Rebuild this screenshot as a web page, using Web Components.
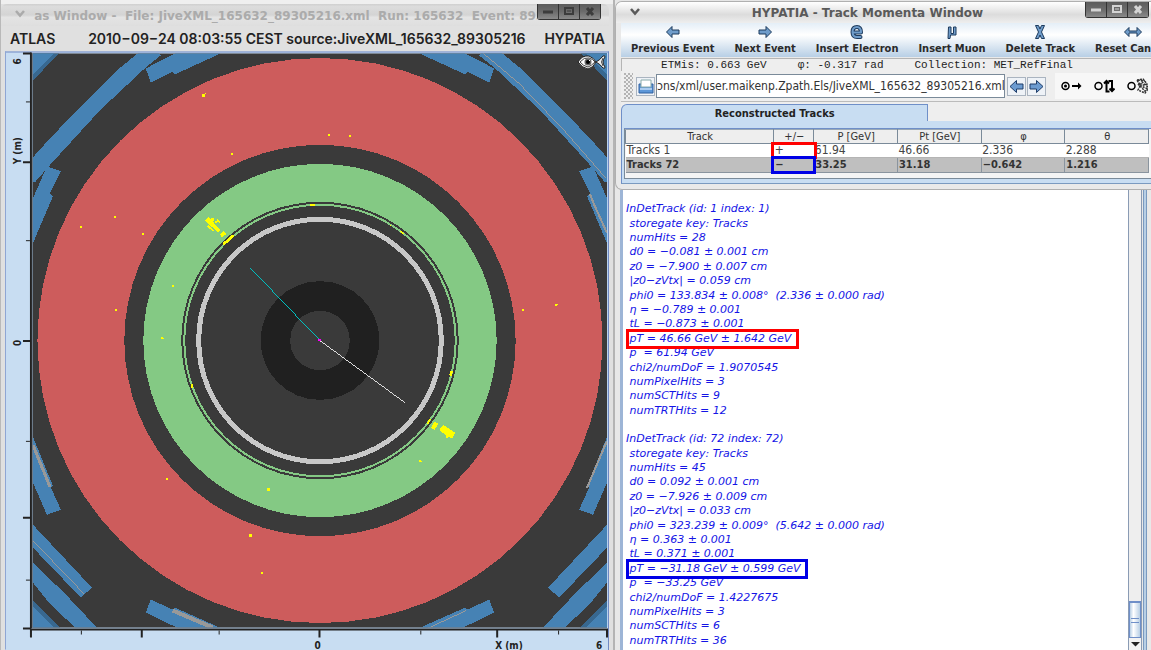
<!DOCTYPE html>
<html lang="en">
<head>
<meta charset="utf-8">
<title>HYPATIA</title>
<style>
html,body{margin:0;height:100%}
body{background:#e6e6e6;overflow:hidden;font-family:"DejaVu Sans",sans-serif;color:#222}
</style>
</head>
<body>
<hypatia-desktop></hypatia-desktop>
<script>
const COND = '"DejaVu Sans Condensed","DejaVu Sans",sans-serif';
const ICONS = {
  left: '<path d="M2.500 7L8 1.500V5H15V9H8V12.500Z"/>',
  right: '<path d="M15.500 7L10 1.500V5H3V9H10V12.500Z"/>',
  e: '<g fill="none" stroke-linecap="round"><path d="M5 7.500H13Q13 2 9 2Q4.500 2 4.500 7Q4.500 12 9 12H12.500" stroke-width="4"/><path d="M5 7.500H13Q13 2 9 2Q4.500 2 4.500 7Q4.500 12 9 12H12.500" stroke="#6f9cca" stroke-width="2"/></g>',
  mu: '<path d="M5 13.500L5.500 2H8V8.500H10.500V2H13V10H7.500L7 13.500Z"/>',
  x: '<path d="M4.500 .5H7.500L9 4L10.500 .5H13.500L10.500 7L13.500 13.500H10.500L9 10L7.500 13.500H4.500L7.500 7Z"/>',
  both: '<path d="M.5 7L5 2.500V6H13V2.500L17.500 7L13 11.500V8H5V11.500Z"/>'
};
function define(name, html, setup) {
  customElements.define(name, class extends HTMLElement {
    connectedCallback() {
      if (this.shadowRoot) return;
      const root = this.attachShadow({mode: 'open'});
      root.innerHTML = typeof html === 'function' ? html(this) : html;
      if (setup) setup(root, this);
    }
  });
}

/* minimise / maximise / close */
define('window-controls', `
<style>
:host{display:flex;flex:none;background:#333;border-radius:0 0 3px 3px;gap:1px;padding:0 1px 1px}
button{width:20px;height:15px;padding:0;border:0;background:linear-gradient(#5c5c5c,#6b6b6b 50%,#8a8a8a);display:grid;place-items:center}
svg{display:block;fill:none;stroke:var(--glyph,#d4d4d4);stroke-width:2}
</style>
<button aria-label="Minimise"><svg width="12" height="9"><path d="M1 5H11" stroke-width="3"/></svg></button>
<button aria-label="Maximise"><svg width="12" height="9"><rect x="2" y="1" width="8" height="6"/><path d="M4 4H8" stroke-width="1"/></svg></button>
<button aria-label="Close"><svg width="12" height="9"><path d="M3 1L9 8M9 1L3 8" stroke-width="3"/></svg></button>`);

define('title-bar', `
<style>
:host{display:flex;align-items:flex-start;font:bold 12px/14px "DejaVu Sans",sans-serif;color:var(--title,#5a5a5a);min-width:0}
.chev{flex:none;width:10px;height:8px;margin:6px 0 0 14px}
.t{flex:1;min-width:0;overflow:hidden;white-space:pre;text-align:var(--align,center);margin:var(--tm,4px 0 0 10px)}
</style>
<svg class="chev" viewBox="0 0 10 8" fill="none" stroke="currentColor" stroke-width="2.5"><path d="M1 1L5 5.500L9 1"/></svg>
<div class="t"><slot></slot></div><window-controls></window-controls>`);

/* detector cross-section with its axes; coordinates are in display units */
define('detector-view', `
<style>
:host{display:block;min-height:0}
svg{display:block;width:100%;height:100%}
text{font:bold 10px ${COND};fill:#222}
</style>
<svg viewBox="5 51 605 599" role="img" aria-label="ATLAS transverse view">
<defs><clipPath id="c"><rect x="33" y="53" width="575" height="575"/></clipPath></defs>
<rect x="5" y="51" width="605" height="600" fill="#c8ddf2"/>
<rect x="5" y="51" width="605" height="1" fill="#7089c4"/><rect x="609" y="51" width="1" height="600" fill="#7089c4"/>
<rect x="5" y="51" width="1" height="599" fill="#8fa6d4"/>
<rect x="32" y="53" width="576" height="575" fill="#3a3a3a"/>
<g clip-path="url(#c)" shape-rendering="crispEdges">
<g id="art"></g><g id="rings"></g>
<g fill="none">
<path d="M33 445L50 487" stroke="#999" stroke-width="3"/>
<path d="M33 541L84 594" stroke="#999"/>
<path d="M173 611L213 628" stroke="#999" stroke-width="4"/>
<path d="M428 629L467 611" stroke="#999"/>
<path d="M608 441L588 488" stroke="#999" stroke-width="2"/>
<path d="M483 52L520 83L565 130L607 178" stroke="#999"/>
<path d="M591 194L595 204L608 233" stroke="#999" stroke-width="2"/>
<path d="M251 268L320 340" stroke="#00c0c0"/>
<path d="M321 341L406 403" stroke="#ddd"/>
<path d="M319 340h3" stroke="#f0f" stroke-width="2"/>
</g><g id="hits" fill="#ff0"></g>
<g fill="#ff0">
<path d="M205 220L209 217L221 230L218 232Z"/><path d="M215 221h2v2h-2zM218 218l1 2 2 1-1 2-3-2zM211 218l3 0 1 3-2 0zM207 226l2-1 6 6-2 0z"/>
<path d="M220 234l4-3 3 3-5 3zM223 243l9-8h2v2l-9 8h-2z"/>
<path d="M427 424l3-5h2l-3 5zM432 428l3-6 4 2-4 6zM440 430l4-5 12 8-3 6-4-2v1h-2v-2z"/>
<path d="M311 204h5v2h-5zM389 224l3 1-1 1zM400 230l5 3-2 1zM450 375l1-4h3l-2 6zM191 384h2v4h-2z"/>
</g></g>
<path d="M31 52V629" stroke="#222" stroke-width="2"/><path d="M32.500 53V628" stroke="#6f7f90"/>
<path d="M30 630H609" stroke="#222" stroke-width="2"/><path d="M32 628.500H608" stroke="#6f7f90"/>
<path d="M608.500 53V628" stroke="#b8d2ee"/>
<g stroke="#222" stroke-width="2"><path d="M23 53h8M23 162h8M23 341h8M23 518h8M23 629h8M31 630v8M142 630v8M320 630v8M498 630v8M608 630v8"/>
<path stroke-width="1" d="M26 101.500h4M26 240.500h4M26 441.500h4M26 580.500h4M81.500 631v4M219.500 631v4M421.500 631v4M559.500 631v4"/></g>
<text transform="translate(21 64) rotate(-90)">6</text>
<text transform="translate(21 164) rotate(-90)">Y (m)</text>
<text transform="translate(21 346) rotate(-90)">0</text>
<text x="315" y="649">0</text><text x="496" y="649">X (m)</text><text x="597" y="649">6</text>
</svg>`, root => {
  const blue = '#4682b4', dark = '#386890';
  const shapes = [
    [dark, '33,52 60,52 33,80'], [blue, '33,52 55,52 33,74'],
    [blue, '139,52 158,52 161,55 146,67 100,110 48,167 35,182 33,182 33,157 51,137 81,106 117,70'],
    [blue, '146,68 177,52 223,52 175,74 173,71 151,82'],
    [blue, '47,166 61,171 50,193 53,196 33,243 33,198'],
    [blue, '33,437 53,486 51,488 61,510 47,515 33,483'],
    [blue, '33,525 92,588 81,598 33,548'],
    [blue, '33,563 65,594 97,628 75,628 49,603 33,583'],
    [dark, '33,601 60,628 33,628'], [blue, '33,607 54,628 33,628'],
    [blue, '151,600 173,610 175,608 220,628 177,628 146,613']];
  const one = shapes.map(([f, p]) => `<polygon fill="${f}" points="${p}"/>`).join('');
  root.getElementById('art').innerHTML = one + `<g transform="matrix(-1 0 0 1 641 0)">${one}</g>`;
  const gon = (r, n, f, s = '') => {
    const p = [];
    for (let i = 0; i < n; i++) {
      const a = i * 2 * Math.PI / n;
      p.push((320.5 + r * Math.cos(a)).toFixed(1) + ',' + (340.5 + r * Math.sin(a)).toFixed(1));
    }
    return `<polygon points="${p.join(' ')}" fill="${f}" ${s}/>`;
  };
  root.getElementById('rings').innerHTML =
    gon(283, 64, '#cd5c5c') + gon(196, 64, '#3a3a3a') + gon(177, 64, '#84c984') +
    gon(138, 64, 'none', 'stroke="#3a3a3a" stroke-width="2"') + gon(135, 64, '#3a3a3a') +
    gon(121.5, 64, 'none', 'stroke="#c8c8c8" stroke-width="5"') +
    gon(59.5, 32, '#202020') + gon(30, 20, '#3a3a3a');
  const hits = [[202,94,3],[205,93,1],[231,153,2],[329,134,2],[350,135,2],[80,226,2],[114,216,2],[142,233,2],[115,309,2],[523,309,2],[556,304,2],[558,304,1],[166,478,2],[267,488,3],[249,534,3],[261,572,2],[420,460,2],[422,461,1],[172,285,2],[161,337,2],[163,338,1]];
  root.getElementById('hits').innerHTML = hits.map(([x, y, s]) => `<rect x="${x}" y="${y}" width="${s}" height="${s}"/>`).join('');
});

define('atlas-window', `
<style>
:host{display:flex;flex-direction:column;min-width:0;min-height:0;background:#e0e0e0;border-right:2px solid #b4b4b4;border-left:1px solid #b9b9b9;box-sizing:border-box;padding:4px 4px 0 4px;box-shadow:inset 0 4px #efefef}
title-bar{height:22px;--title:#ababab;--glyph:#3c3c3c;--align:left;--tm:5px 0 0 5px;background:linear-gradient(#cfcfcf,#dcdcdc 12%,#d4d4d4 50%,#e4e4e4 60%,#dedede);border-radius:6px 6px 0 0;padding-right:8px;margin-left:-4px}
header{height:25px;display:flex;justify-content:space-between;align-items:center;font:600 14px/16px Inter,"DejaVu Sans",sans-serif;padding:0 4px 0 5px;white-space:nowrap;background:#e0e0e0}
header span:nth-child(2){margin:0 0 0 14px}
.view{flex:1;min-height:0;position:relative;display:grid}
button{position:absolute;top:3px;right:3px;width:29px;height:16px;padding:0;border:0;background:none}
</style>
<title-bar> as Window -  File: JiveXML_165632_89305216.xml  Run: 165632  Event: 89305216</title-bar>
<header><span>ATLAS</span><span>2010−09−24 08:03:55 CEST source:JiveXML_165632_89305216</span><span>HYPATIA</span></header>
<div class="view"><detector-view></detector-view>
<button aria-label="Fish-eye view"><svg width="29" height="16" viewBox="0 0 29 16" style="display:block">
<path d="M1 8Q5 1 12 2Q17 4 19 8Q16 14 11 15Q5 14 1 8Z" fill="#eee" stroke="#222"/>
<path d="M3 8Q7 3 12 4Q16 5 18 8Q14 12 11 13Q6 12 3 8Z" fill="#fff" stroke="#444"/>
<circle cx="11" cy="8" r="3.500" fill="#666"/><circle cx="11" cy="8" r="2" fill="#000"/><rect x="12" y="6" width="1" height="1" fill="#fff"/>
<path d="M19 8Q23 6 26 2Q28 1 28 3Q24 8 28 13Q28 15 26 14Q23 10 19 8Z" fill="#eee" stroke="#222"/><path d="M26 4Q23 8 26 12" fill="none" stroke="#444"/></svg></button></div>`);

/* icon over caption in the main toolbar */
define('tool-button', el => `
<style>
:host{display:block;flex:none}
button{font:bold 11px/14px ${COND};color:#2a2a2a;border:0;background:none;padding:0 10px;height:34px;display:grid;justify-items:center;grid-template-rows:18px 16px;align-items:center;white-space:nowrap}
svg{display:block;fill:#6f9cca;stroke:#1d3a5c;stroke-width:1;stroke-linejoin:round}
</style>
<button><svg width="18" height="14" viewBox="0 0 18 14">${ICONS[el.getAttribute('icon')]}</svg><span><slot></slot></span></button>`);

define('file-bar', `
<style>
:host{display:flex;align-items:center;height:30px;background:#eee;min-width:0}
.grip{flex:none;width:9px;height:26px;margin:0 3px 0 3px;background:radial-gradient(circle at 1px 1px,#b4b4b4 1px,transparent 1px) 0 0/4px 4px,radial-gradient(circle at 1px 1px,#b4b4b4 1px,transparent 1px) 2px 2px/4px 4px}
button{flex:none;width:19px;height:19px;padding:0;border:1px solid #aab4c0;background:#eef2f7;display:grid;place-items:center}
.open{margin-right:1px}
input{flex:1;min-width:0;box-sizing:border-box;height:24px;border:1px solid #7a8a99;background:#fff;font:12px/14px ${COND};color:#333;padding:0;margin:0 2px 0 0}
.go{margin-right:1px}
.modes{flex:none;display:flex;gap:12px;margin-left:9px;padding:4px 3px 4px 6px;background:#f7f7f7;overflow:hidden}
label{display:block;height:18px;position:relative;width:21px}
label input{position:absolute;opacity:0;width:12px;height:12px;margin:3px 0}
svg{display:block}
</style>
<span class="grip"></span>
<button class="open" aria-label="Open file"><svg width="16" height="16" viewBox="0 0 16 16"><path d="M1 6H15V15H1Z" fill="#5d97d8" stroke="#2f5f9f"/><path d="M3 2H13V9H3Z" fill="#fff" stroke="#8aa"/><path d="M2 10H14V12H2Z" fill="#a9cbf0"/></svg></button>
<input type="text" aria-label="Event file" value="ɔns/xml/user.maikenp.Zpath.Els/JiveXML_165632_89305216.xml">
<button class="go" aria-label="Previous"><svg width="15" height="15" viewBox="0 0 15 15"><path d="M1 7.500L7.500 1.500V5H14V10H7.500V13.500Z" fill="#6c9bd0" stroke="#1f3d68"/></svg></button>
<button aria-label="Next"><svg width="15" height="15" viewBox="0 0 15 15"><path d="M14 7.500L7.500 1.500V5H1V10H7.500V13.500Z" fill="#6c9bd0" stroke="#1f3d68"/></svg></button>
<div class="modes">
<label><input type="radio" name="m" checked aria-label="Next in order"><svg width="21" height="18"><circle cx="4.500" cy="9" r="3.500" fill="none" stroke="#000" stroke-width="1.500"/><circle cx="4.500" cy="9" r="1.500"/><path d="M11 9H18" stroke="#000" stroke-width="2"/><path d="M17 5.500L20.500 9L17 12.500Z"/></svg></label>
<label><input type="radio" name="m" aria-label="Loop"><svg width="21" height="18" fill="none" stroke="#000"><circle cx="4.500" cy="9" r="3.500" stroke-width="1.500"/><path d="M10 6.500L12.500 4L15 6.500M12.500 5V14.500H15.500" stroke-width="2"/><path d="M14.500 4H18V13M15.500 11.500L18 14L20.500 11.500" stroke-width="2"/></svg></label>
<label><input type="radio" name="m" aria-label="Random"><svg width="21" height="18" fill="none" stroke="#000"><circle cx="4.500" cy="9" r="3.500" stroke-width="1.500"/><path d="M10 3l6-1 4 5-7 2-3-6M11 7l7 7 3-4-6-5-4 8 7 3 3-4-7-3-4-6 8 1" stroke="#333" stroke-width="1.500" stroke-dasharray="2 1"/></svg></label>
</div>`);

define('track-table', `
<style>
:host{display:block}
table{width:100%;table-layout:fixed;border-collapse:collapse;font:12px/13px ${COND};color:#444}
.sign{width:40px}.num{width:16%}
th,td{padding:0 0 0 1px;height:13px;text-align:left;white-space:nowrap;position:relative}
th{font:11px/13px ${COND};text-align:center;background:#eee;color:#333;border:1px solid #7a8a99;border-top-color:#9aa8b6}
td{background:#fff;border-bottom:1px solid #b4b4b4}
.sel td{background:#bfbfbf;font:bold 11px/14px ${COND};color:#333;height:14px;border-right:1px solid #8a949e;border-bottom-color:#8a949e}
.mark::after{content:"";position:absolute;inset:-2px -3px -2px -3px;border:3px solid var(--m);z-index:1}
</style>
<table><colgroup><col><col class="sign"><col class="num"><col class="num"><col class="num"><col class="num"></colgroup>
<thead><tr><th>Track</th><th>+/−</th><th>P [GeV]</th><th>Pt [GeV]</th><th>φ</th><th>θ</th></tr></thead>
<tbody><tr><td>Tracks 1</td><td class="mark" style="--m:#f00">+</td><td>61.94</td><td>46.66</td><td>2.336</td><td>2.288</td></tr>
<tr class="sel"><td>Tracks 72</td><td class="mark" style="--m:#0000e6">−</td><td>33.25</td><td>31.18</td><td>−0.642</td><td>1.216</td></tr></tbody></table>`);

define('track-window', `
<style>
:host{display:block;flex:none;background:#e9e9e9;border:1px solid #b0b0b0;border-right:0;border-radius:7px 0 0 7px;margin-top:1px;box-sizing:border-box;padding:0 0 5px 5px;overflow:hidden}
title-bar{height:21px;margin-left:-5px;padding-right:2px;background:linear-gradient(#fff,#e8e8e8 40%,#dcdcdc 60%,#eee)}
.tools{display:flex;overflow:hidden;background:linear-gradient(#e4eef7,#fff 35%,#b8cfe5)}
.info{display:flex;justify-content:center;gap:31px;padding-right:39px;font:11px/12px "Liberation Mono",monospace;white-space:pre;border:1px solid #b5b5b5;border-width:1px 0 0 1px;margin-top:1px;background:#eee;color:#222}
.tabs{border-top:1px solid #bbb;padding-top:2px;background:#eee}
.tab{display:block;box-sizing:border-box;width:58%;height:17px;border:1px solid #6f8fc8;border-bottom:0;border-radius:6px 0 0 0;background:#c8ddf2;font:bold 11px/17px ${COND};color:#222;text-align:center;padding:0}
.pane{border-left:1px solid #6f8fc8;border-bottom:1px solid #7a9ac0;background:#c8ddf2;padding:7px 0 4px}
.in{border:1px solid #7a8a99;border-right:0;padding:0 2px 5px 0;background:#f4f4f4;margin-left:2px;border-top:1px solid #6f8fc8}
</style>
<title-bar>HYPATIA - Track Momenta Window</title-bar>
<div class="tools"><tool-button icon="left">Previous Event</tool-button><tool-button icon="right">Next Event</tool-button><tool-button icon="e">Insert Electron</tool-button><tool-button icon="mu">Insert Muon</tool-button><tool-button icon="x">Delete Track</tool-button><tool-button icon="both">Reset Canvas</tool-button></div>
<div class="info"><span>ETMis: 0.663 GeV</span><span>φ: -0.317 rad</span><span>Collection: MET_RefFinal</span></div>
<file-bar></file-bar>
<div class="tabs"><button class="tab">Reconstructed Tracks</button></div>
<div class="pane"><div class="in"><track-table></track-table></div></div>`);

/* one track's listing, a line per row; the pT row is framed in --mark */
define('track-report', `
<style>
:host{display:grid;grid-auto-rows:1fr;height:216px;font:italic 11px/14px "DejaVu Sans",sans-serif;color:#1414e6;white-space:pre}
div{position:relative;justify-self:start;display:flex;align-items:center}
.m{z-index:1}
.m::after{content:"";position:absolute;inset:-3px -8px -3px 0;border:3px solid var(--mark)}
</style>`, (root, el) => {
  const {id, hits, d0, z0, dz, phi, eta, tl, pt, p, chi, sct, trt} = el.track;
  const lines = [
    `InDetTrack (id: ${id} index: ${id})`, ' storegate key: Tracks', ` numHits = ${hits}`, ` d0 = ${d0} cm`, ` z0 = ${z0} cm`,
    ` |z0−zVtx| = ${dz} cm`, ` phi0 = ${phi} rad)`, ` η = ${eta} ± 0.001`, ` tL = ${tl} ± 0.001`, ` pT = ${pt} GeV`,
    ` p  = ${p} GeV`, ` chi2/numDoF = ${chi}`, ' numPixelHits = 3', ` numSCTHits = ${sct}`, ` numTRTHits = ${trt}`];
  for (const line of lines) {
    const d = document.createElement('div');
    d.textContent = line;
    if (line.startsWith(' pT')) d.className = 'm';
    root.append(d);
  }
});

const TRACKS = [
  {mark: '#f00', id: 1, hits: 28, d0: '−0.081 ± 0.001', z0: '−7.900 ± 0.007', dz: '0.059', phi: '133.834 ± 0.008°  (2.336 ± 0.000', eta: '−0.789', tl: '−0.873', pt: '46.66 GeV ± 1.642', p: '61.94', chi: '1.9070545', sct: 9, trt: 12},
  {mark: '#0000e6', id: 72, hits: 45, d0: '0.092 ± 0.001', z0: '−7.926 ± 0.009', dz: '0.033', phi: '323.239 ± 0.009°  (5.642 ± 0.000', eta: '0.363', tl: '0.371', pt: '−31.18 GeV ± 0.599', p: '−33.25', chi: '1.4227675', sct: 6, trt: 36}];

define('output-panel', `
<style>
:host{display:flex;flex:1;min-height:0;overflow:hidden;background:#e8e8e8;padding:0 4px 0 5px}
.text{flex:1;min-width:0;background:#fff;border-left:3px solid #9db5d6;padding:12px 0 0 3px;overflow:hidden}
track-report{margin-bottom:14px}
.bar{flex:none;width:12px;background:#eee;border:1px solid #8a9bb4;border-width:0 1px;display:flex;flex-direction:column;justify-content:flex-end}
.thumb{height:34px;border:1px solid #6f8fc8;border-width:2px 1px 1px;background:linear-gradient(90deg,#b8cfe5,#fff 35%,#b8cfe5);display:grid;place-items:center}
.thumb i{width:8px;height:3px;border:1px solid #6f8fc8;border-width:1px 0}
.down{height:12px;display:grid;place-items:center;border:0;padding:0;background:#f2f2f2}
.edge{flex:none;width:2px;margin-left:1px;background:#b8cfe5;border-left:1px solid #7a9ac0;border-right:1px solid #7a9ac0}
</style>
<div class="text"></div>
<div class="bar"><div class="thumb"><i></i></div><button class="down" aria-label="Scroll down"><svg width="9" height="6"><path d="M0 1H9L4.500 5.500Z" fill="#222"/></svg></button></div><div class="edge"></div>`, root => {
  for (const track of TRACKS) {
    const r = document.createElement('track-report');
    r.track = track;
    r.style.setProperty('--mark', track.mark);
    root.querySelector('.text').append(r);
  }
});

define('hypatia-desktop', `
<style>
:host{display:grid;grid-template-columns:615fr 536fr;grid-template-rows:minmax(0,1fr);height:100vh}
.right{display:flex;flex-direction:column;min-width:0;min-height:0}
</style>
<atlas-window></atlas-window>
<div class="right"><track-window></track-window><output-panel></output-panel></div>`);
</script>
</body>
</html>
